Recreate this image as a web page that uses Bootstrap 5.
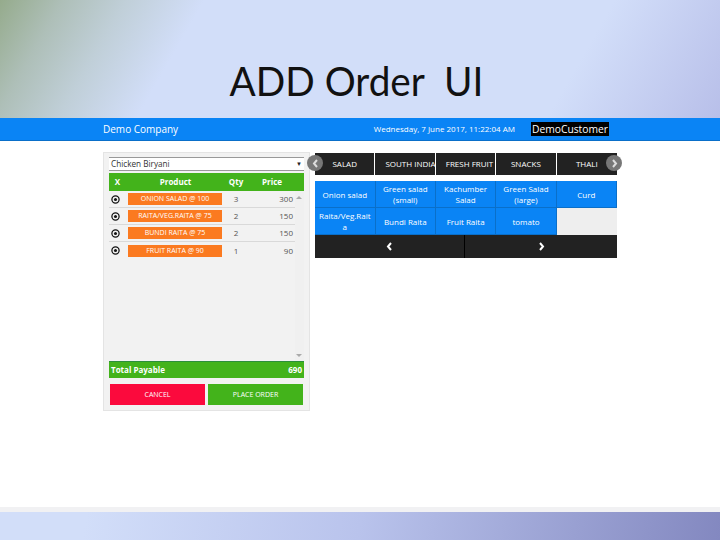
<!DOCTYPE html>
<html lang="en">
<head>
<meta charset="utf-8">
<title>ADD Order UI</title>
<link href="https://cdn.jsdelivr.net/npm/bootstrap@5.3.0/dist/css/bootstrap.min.css" rel="stylesheet">
<style>
html,body{margin:0;height:540px;overflow:hidden}
body{font-family:"Open Sans",sans-serif;background:#fff;color:#333}
.slide{height:540px;display:flex;flex-direction:column}
.head-zone{height:118px;display:flex;align-items:flex-end;justify-content:center;background:linear-gradient(120deg,#95ab8c 0%,#aebfb8 8%,#c0cfd8 16%,#d2def9 26%,#d2def9 78%,#b8bfe9 100%)}
.slide-title{font-family:Lato,sans-serif;font-size:41px;line-height:1;color:#111;margin:0 0 17px;white-space:pre;font-weight:400;padding-right:7px;transform:scaleX(.945)}
.app-bar{height:23px;background:#0a84f5;color:#fff;padding:0 111px 0 103px;border-bottom:1px solid #0a6fc9}
.brand-name{font-size:10px}
.clock{font-size:8px;margin-right:16px}
.cust{font-size:10.3px;background:#000;color:#fff;line-height:14px;padding:0 1px}
.work{flex:1;padding:11px 0 0 103px;gap:5px;align-items:flex-start}
.order-pane{width:207px;height:259px;background:#f2f2f2;border:1px solid #e4e4e4;padding:4px 5px 5px;display:flex;flex-direction:column}
.pick{height:14px;background:#fff;border-top:1px solid #999;border-bottom:1px solid #999;font-size:8.2px;padding:0 2px;color:#333;line-height:12px}
.pick i{font-style:normal;font-size:6px;color:#222}
.grid-order{display:grid;grid-template-columns:17px 102px 16px 1fr;align-items:center}
.col-hd{margin-top:2px;height:18px;background:#43b31b;color:#fff;font-size:8px;font-weight:700;line-height:18px;text-align:center}
.col-hd span:nth-child(2){padding-right:3px}
.col-hd span:nth-child(4){padding-right:4px}
.line-wrap{flex:1;position:relative;padding-right:9px}
.line-wrap::before{content:"";position:absolute;right:0;top:0;bottom:0;width:9px;background:#f0f0f0}
.sc-up,.sc-dn{position:absolute;right:2px;width:0;height:0;border-left:3px solid transparent;border-right:3px solid transparent}
.sc-up{top:5px;border-bottom:3px solid #aaa}
.sc-dn{bottom:4px;border-top:3px solid #aaa}
.item-line{height:17px;border-bottom:1px solid #d9d9d9;font-size:8px;color:#555;text-align:center}
.item-line:last-child{border-bottom:0}
.rm{display:block;width:9px;height:9px;margin-left:2px}
.tag{display:block;width:94px;height:12px;margin-left:2px;background:#fb7a20;color:#fff;font-size:7px;line-height:12px;white-space:nowrap;overflow:hidden}
.pr{text-align:right;padding-right:2px}
.total-bar{height:17px;background:#43b31b;border-top:1px solid #2c8f3a;color:#fff;font-size:8px;font-weight:700;padding:0 2px;line-height:16px}
.act{margin-top:6px;gap:3px;padding:0 1px}
.act .btn{flex:1;height:21px;padding:0;border:0;border-radius:0;font-size:7px;line-height:21px;color:#fff}
.btn-stop{background:#fb0a3d}
.btn-go{background:#43b31b}
.menu-pane{width:302px;position:relative;padding-top:1px}
.tab-strip{display:grid;grid-template-columns:repeat(5,1fr);height:22px}
.tab-cell{background:#222;color:#fff;font-size:8px;line-height:22px;padding:0 10px;text-align:center;white-space:nowrap;overflow:hidden;border-right:1px solid #fff}
.tab-cell:last-child{border-right:0}
.round-nav{position:absolute;top:3px;width:16px;height:16px;border-radius:50%;background:#777;color:#ccc;display:flex;align-items:center;justify-content:center}
.nav-l{left:-8px}
.nav-r{right:-5px}
.dish-grid{margin-top:6px;display:grid;grid-template-columns:repeat(5,1fr);grid-template-rows:repeat(2,27px);background:#eee}
.dish{background:#0a84f5;color:#fff;font-size:8px;line-height:11px;text-align:center;display:flex;align-items:center;justify-content:center;border-right:1px solid #0a6fc9;border-bottom:1px solid #0a6fc9;padding:0 4px}
.pager{height:23px;background:#222;display:grid;grid-template-columns:150px 1fr}
.pager div{display:flex;align-items:center;justify-content:center}
.pager div:first-child{border-right:1px solid #000}
.foot-line{height:5px;background:#f1f1f3;margin-top:auto}
.foot-band{height:28px;background:linear-gradient(100deg,#d2def9 0%,#d2def9 12%,#b9c3ec 50%,#8388c0 100%)}
</style>
</head>
<body>
<div class="slide">
  <div class="head-zone"><h1 class="slide-title">ADD Order  UI</h1></div>
  <div class="app-bar d-flex align-items-center">
    <span class="brand-name">Demo Company</span>
    <span class="clock ms-auto">Wednesday, 7 June 2017, 11:22:04 AM</span>
    <span class="cust">DemoCustomer</span>
  </div>
  <div class="work d-flex">
    <div class="order-pane">
      <div class="pick d-flex justify-content-between"><span>Chicken Biryani</span><i>▼</i></div>
      <div class="col-hd grid-order"><span>X</span><span>Product</span><span>Qty</span><span>Price</span></div>
      <div class="line-wrap">
        <span class="sc-up"></span><span class="sc-dn"></span>
        <div class="item-line grid-order"><svg class="rm" viewBox="0 0 10 10"><circle cx="5" cy="5" r="4" fill="none" stroke="#111" stroke-width="1.4"/><circle cx="5" cy="5" r="1.7" fill="#111"/></svg><span class="tag">ONION SALAD @ 100</span><span>3</span><span class="pr">300</span></div>
        <div class="item-line grid-order"><svg class="rm" viewBox="0 0 10 10"><circle cx="5" cy="5" r="4" fill="none" stroke="#111" stroke-width="1.4"/><circle cx="5" cy="5" r="1.7" fill="#111"/></svg><span class="tag">RAITA/VEG.RAITA @ 75</span><span>2</span><span class="pr">150</span></div>
        <div class="item-line grid-order"><svg class="rm" viewBox="0 0 10 10"><circle cx="5" cy="5" r="4" fill="none" stroke="#111" stroke-width="1.4"/><circle cx="5" cy="5" r="1.7" fill="#111"/></svg><span class="tag">BUNDI RAITA @ 75</span><span>2</span><span class="pr">150</span></div>
        <div class="item-line grid-order"><svg class="rm" viewBox="0 0 10 10"><circle cx="5" cy="5" r="4" fill="none" stroke="#111" stroke-width="1.4"/><circle cx="5" cy="5" r="1.7" fill="#111"/></svg><span class="tag">FRUIT RAITA @ 90</span><span>1</span><span class="pr">90</span></div>
      </div>
      <div class="total-bar d-flex justify-content-between"><span>Total Payable</span><span>690</span></div>
      <div class="act d-flex">
        <button class="btn btn-stop" type="button">CANCEL</button>
        <button class="btn btn-go" type="button">PLACE ORDER</button>
      </div>
    </div>
    <div class="menu-pane">
      <div class="tab-strip">
        <div class="tab-cell">SALAD</div><div class="tab-cell">SOUTH INDIA</div><div class="tab-cell">FRESH FRUIT</div><div class="tab-cell">SNACKS</div><div class="tab-cell">THALI</div>
      </div>
      <span class="round-nav nav-l"><svg width="7" height="9" viewBox="0 0 7 9"><path d="M5 1 2 4.5 5 8" fill="none" stroke="#ddd" stroke-width="2"/></svg></span>
      <span class="round-nav nav-r"><svg width="7" height="9" viewBox="0 0 7 9"><path d="M2 1 5 4.5 2 8" fill="none" stroke="#ddd" stroke-width="2"/></svg></span>
      <div class="dish-grid">
        <div class="dish">Onion salad</div><div class="dish">Green salad (small)</div><div class="dish">Kachumber Salad</div><div class="dish">Green Salad (large)</div><div class="dish">Curd</div>
        <div class="dish">Raita/Veg.Rait<br>a</div><div class="dish">Bundi Raita</div><div class="dish">Fruit Raita</div><div class="dish">tomato</div>
      </div>
      <div class="pager">
        <div><svg width="7" height="9" viewBox="0 0 7 9"><path d="M5 1 2 4.5 5 8" fill="none" stroke="#fff" stroke-width="2"/></svg></div>
        <div><svg width="7" height="9" viewBox="0 0 7 9"><path d="M2 1 5 4.5 2 8" fill="none" stroke="#fff" stroke-width="2"/></svg></div>
      </div>
    </div>
  </div>
  <div class="foot-line"></div>
  <div class="foot-band"></div>
</div>
<script src="https://cdn.jsdelivr.net/npm/bootstrap@5.3.0/dist/js/bootstrap.bundle.min.js"></script>
</body>
</html>
